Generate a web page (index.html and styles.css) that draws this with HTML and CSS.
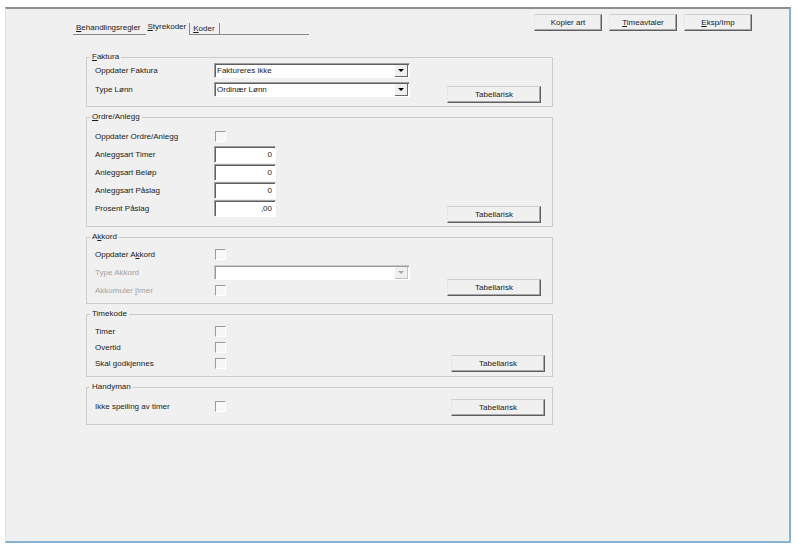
FILE: index.html
```html
<!DOCTYPE html>
<html>
<head>
    <meta charset="utf-8">
    <link rel="stylesheet" href="styles.css">
</head>
<body>
    <div class="window">

        <!-- faner og knapper oppe -->
        <div class="header">
            <div class="tabs">
                <span class="tab"><u>B</u>ehandlingsregler</span>
                <span class="tab tab-active"><u>S</u>tyrekoder</span>
                <span class="tab tab-boxed"><u>K</u>oder</span>
                <span class="tab tab-rest"></span>
            </div>
            <div class="actions">
                <button class="btn">Kopier art</button>
                <button class="btn"><u>T</u>imeavtaler</button>
                <button class="btn"><u>E</u>ksp/Imp</button>
            </div>
        </div>

        <div class="content">

            <fieldset class="box box-faktura">
                <legend><u>F</u>aktura</legend>
                <div class="row">
                    <span class="label">Oppdater Faktura</span>
                    <div class="select"><span class="value">Faktureres ikke</span><span class="drop"><i></i></span></div>
                </div>
                <div class="row">
                    <span class="label">Type Lønn</span>
                    <div class="select"><span class="value">Ordinær Lønn</span><span class="drop"><i></i></span></div>
                    <button class="btn btn-tab shift-5">Tabellarisk</button>
                </div>
            </fieldset>

            <fieldset class="box box-ordre">
                <legend><u>O</u>rdre/Anlegg</legend>
                <div class="row">
                    <span class="label">Oppdater Ordre/Anlegg</span>
                    <span class="check"></span>
                </div>
                <div class="row">
                    <span class="label">Anleggsart Timer</span>
                    <div class="input">0</div>
                </div>
                <div class="row">
                    <span class="label">Anleggsart Beløp</span>
                    <div class="input">0</div>
                </div>
                <div class="row">
                    <span class="label">Anleggsart Påslag</span>
                    <div class="input">0</div>
                </div>
                <div class="row">
                    <span class="label">Prosent Påslag</span>
                    <div class="input">,00</div>
                    <button class="btn btn-tab shift-6">Tabellarisk</button>
                </div>
            </fieldset>

            <fieldset class="box box-akkord">
                <legend>A<u>k</u>kord</legend>
                <div class="row">
                    <span class="label">Oppdater A<u>k</u>kord</span>
                    <span class="check"></span>
                </div>
                <div class="row">
                    <span class="label disabled">Type Akkord</span>
                    <div class="select select-disabled"><span class="value"></span><span class="drop"><i></i></span></div>
                </div>
                <div class="row">
                    <span class="label disabled">Akkumuler <u>t</u>imer</span>
                    <span class="check"></span>
                    <button class="btn btn-tab shift-up-3">Tabellarisk</button>
                </div>
            </fieldset>

            <fieldset class="box box-timekode">
                <legend>Timekode</legend>
                <div class="row">
                    <span class="label">Timer</span>
                    <span class="check"></span>
                </div>
                <div class="row">
                    <span class="label">Overtid</span>
                    <span class="check"></span>
                </div>
                <div class="row">
                    <span class="label">Skal godkjennes</span>
                    <span class="check"></span>
                    <button class="btn btn-tab btn-wide">Tabellarisk</button>
                </div>
            </fieldset>

            <fieldset class="box box-handyman">
                <legend>Handyman</legend>
                <div class="row">
                    <span class="label">Ikke speiling av timer</span>
                    <span class="check"></span>
                    <button class="btn btn-tab btn-wide shift-1">Tabellarisk</button>
                </div>
            </fieldset>

        </div>
    </div>
</body>
</html>
```

FILE: styles.css
```css
body {
    margin: 0;
    background-color: #ffffff;
    font-family: 'Liberation Sans', Arial, sans-serif;
    font-size: 8px;
    color: #1a1a1a;
}

/* ======= vinduet ======= */
.window {
    margin: 7px 0 0 5px;
    width: 783px;
    height: 532px;
    background-color: #f0f0f0;
    border-top: 2px solid #8e8e8e;
    border-left: 1px solid #e4e4e4;
    border-right: 2px solid #86b4d0;
    border-bottom: 2px solid #86b4d0;
}

.header {
    display: flex;
    align-items: flex-start;
    height: 44px;
}

/* ======= faner ======= */
.tabs {
    display: flex;
    align-items: flex-end;
    margin-top: 11px;
    margin-left: 67px;
}

.tab {
    line-height: 13px;
    padding: 0 5px 0 3px;
    border-bottom: 1px solid #8a8a8a;
    white-space: nowrap;
}

.tab-active {
    border-bottom: none;
    padding: 0 3px 2px 2px;
}

.tab-boxed {
    border-left: 1px solid #8a8a8a;
    border-right: 1px solid #8a8a8a;
    padding: 0 4px 0 3px;
    line-height: 11px;
}

.tab-rest {
    width: 89px;
    padding: 0;
    height: 0;
}

.actions {
    display: flex;
    gap: 7px;
    margin-left: auto;
    margin-right: 37px;
    margin-top: 5px;
}

/* ======= knapper ======= */
.btn {
    font-family: 'Liberation Sans', Arial, sans-serif;
    font-size: 8px;
    color: #1a1a1a;
    background-color: #f0f0f0;
    width: 68px;
    height: 17px;
    padding: 0;
    border: 1px solid;
    border-color: #cfcfcf #5e5e5e #5e5e5e #e8e8e8;
    box-shadow: inset -1px -1px 0 #a8a8a8;
    border-radius: 0;
}

.btn-tab {
    width: 94px;
    margin-left: auto;
}

.btn-wide {
    margin-right: -4px;
}

.shift-5 { margin-top: 5px; margin-bottom: -5px; }
.shift-6 { margin-top: 6px; margin-bottom: -6px; }
.shift-1 { margin-top: 1px; margin-bottom: -1px; }
.shift-up-3 { margin-top: -3px; margin-bottom: 3px; }

/* ======= grupperammer ======= */
.content {
    margin-left: 80px;
    width: 467px;
}

.box {
    margin: 6px 0 0 0;
    padding: 0 11px 0 8px;
    border: 1px solid #cbcbcb;
    min-width: 0;
}

.box:first-child {
    margin-top: 0;
}

.box legend {
    line-height: 8px;
    padding: 0 2px;
    margin-left: -5px;
}

.box-faktura { padding-bottom: 7px; }
.box-faktura .row { height: 19px; }

.box-ordre { padding-top: 6px; padding-bottom: 9px; }
.box-ordre .row { height: 18px; }

.box-akkord { padding-top: 4px; padding-bottom: 4px; }
.box-akkord .row { height: 18px; }

.box-timekode { padding-top: 5px; padding-bottom: 5px; }
.box-timekode .row { height: 16px; }

.box-handyman { padding-top: 7px; padding-bottom: 10px; }
.box-handyman .row { height: 16px; }

.row {
    display: flex;
    align-items: center;
}

.label {
    width: 119px;
    flex-shrink: 0;
    white-space: nowrap;
}

.disabled {
    color: #a3a3a3;
}

/* ======= felter ======= */
.select {
    display: flex;
    width: 196px;
    height: 15px;
    box-sizing: border-box;
    background-color: #ffffff;
    border: 1px solid;
    border-color: #a0a0a0 #ffffff #ffffff #a0a0a0;
    box-shadow: inset 1px 1px 0 #5f5f5f;
}

.select .value {
    flex: 1;
    line-height: 13px;
    padding-left: 2px;
}

.select .drop {
    width: 12px;
    margin: 1px 1px 0 0;
    background-color: #f0f0f0;
    border-right: 1px solid #6a6a6a;
    border-bottom: 1px solid #6a6a6a;
    display: flex;
    align-items: center;
    justify-content: center;
}

.select .drop i {
    width: 0;
    height: 0;
    border-left: 3px solid transparent;
    border-right: 3px solid transparent;
    border-top: 3px solid #000000;
}

.select-disabled {
    border-color: #c8c8c8 #ffffff #ffffff #c8c8c8;
    box-shadow: inset 1px 1px 0 #9a9a9a;
}

.select-disabled .drop {
    border-right-color: #c4c4c4;
    border-bottom-color: #c4c4c4;
}

.select-disabled .drop i {
    border-top-color: #a8a8a8;
}

.input {
    width: 62px;
    height: 17px;
    box-sizing: border-box;
    background-color: #ffffff;
    border: 1px solid;
    border-color: #a0a0a0 #ffffff #ffffff #a0a0a0;
    box-shadow: inset 1px 1px 0 #5f5f5f;
    text-align: right;
    line-height: 15px;
    padding-right: 3px;
}

.check {
    width: 9px;
    height: 9px;
    margin-left: 1px;
    flex-shrink: 0;
    background-color: #f7f7f7;
    border-top: 1px solid #9c9c9c;
    border-left: 1px solid #9c9c9c;
    border-right: 1px solid #ffffff;
    border-bottom: 1px solid #ffffff;
}
```
